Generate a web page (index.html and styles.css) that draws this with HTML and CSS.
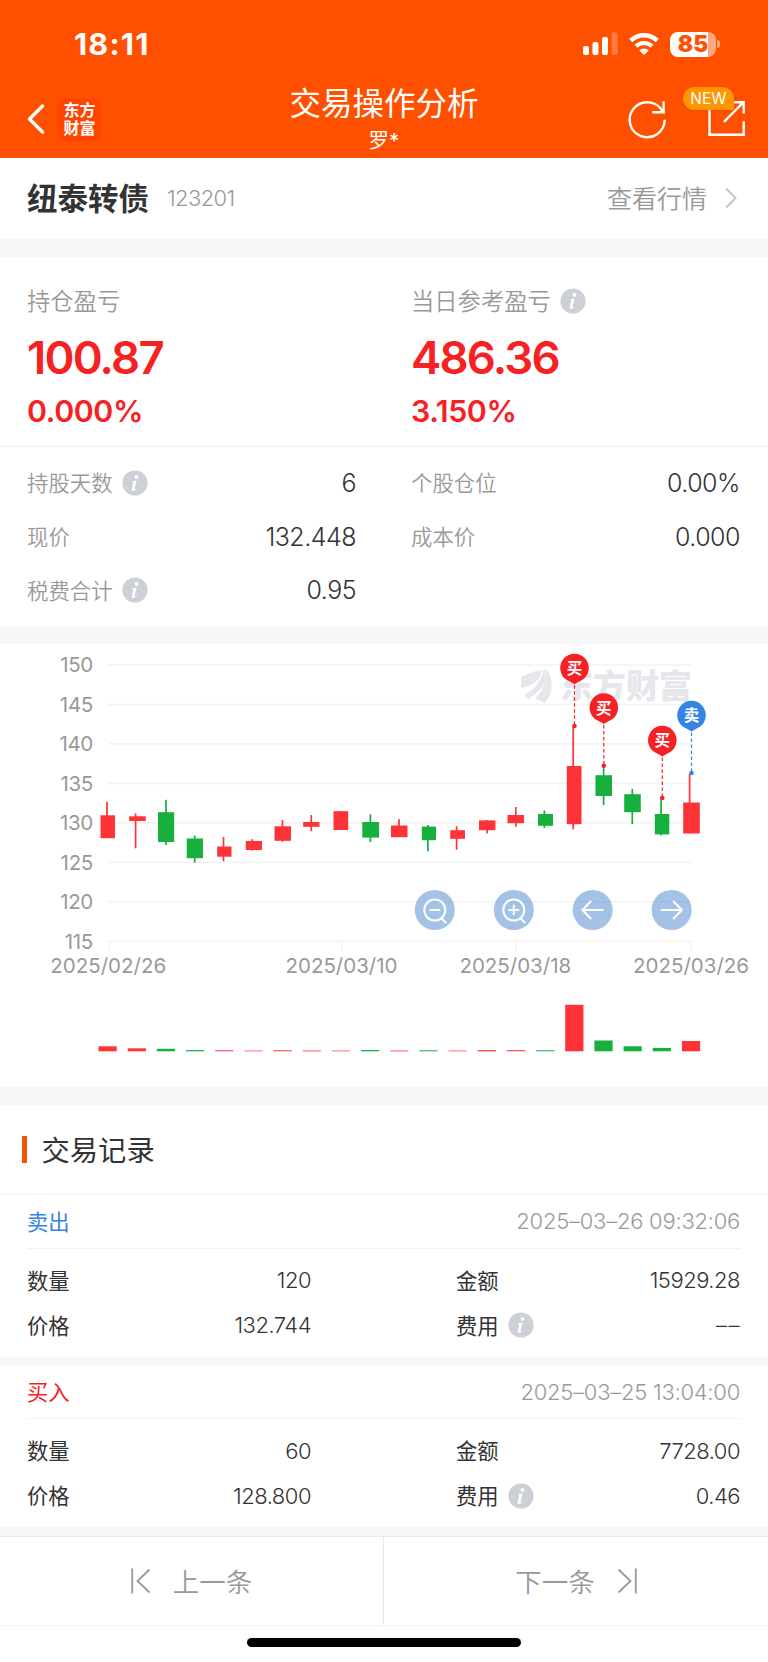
FILE: index.html
```
<!DOCTYPE html>
<html lang="zh">
<head>
  <meta charset="UTF-8">
  <title>交易操作分析</title>
  <meta name="viewport" content="width=device-width, initial-scale=1.0">
  <link rel="stylesheet" href="styles.css">
</head>
<body>

  <svg class="symbols" width="0" height="0">
    <symbol id="info" viewBox="0 0 26 26">
      <circle cx="13" cy="13" r="12.6" fill="#cdd0d6"/>
      <circle cx="14.5" cy="6.9" r="1.9" fill="#fff"/>
      <path d="M10.3 11.2l4.3-.7-2 8q-.3 1.3 1.8.2l.3.6q-4.9 3.4-5.1.4l1.7-7.3-1.1-.5z" fill="#fff"/>
    </symbol>
  </svg>

  <header class="header">
    <div class="status-bar">
      <span class="time">18:11</span>
      <div class="status-icons">
        <svg width="36" height="24" viewBox="0 0 36 24" fill="#fff">
          <rect x="0" y="14" width="6" height="9" rx="2"/>
          <rect x="9.5" y="10" width="6" height="13" rx="2"/>
          <rect x="19" y="5" width="6" height="18" rx="2"/>
          <rect x="28.7" y="0.5" width="6" height="22.5" rx="2" opacity="0.25"/>
        </svg>
        <svg class="wifi" width="30" height="24" viewBox="0 0 30 24">
          <path d="M1.8 8.6a19 19 0 0 1 26.4 0" fill="none" stroke="#fff" stroke-width="4.3"/>
          <path d="M6.9 14.2a11.6 11.6 0 0 1 16.2 0" fill="none" stroke="#fff" stroke-width="4"/>
          <path d="M10.2 18.4a7 7 0 0 1 9.6 0L15 23z" fill="#fff"/>
        </svg>
        <div class="battery"><span>85</span></div>
        <i class="battery-cap"></i>
      </div>
    </div>
    <div class="nav-bar">
      <div class="nav-left">
        <svg width="18" height="32" viewBox="0 0 18 32"><path d="M15.5 3L2.5 16l13 13" fill="none" stroke="#fff" stroke-width="3.4" stroke-linecap="round" stroke-linejoin="round"/></svg>
        <div class="brand">东方<br>财富</div>
      </div>
      <div class="nav-title">
        <h1>交易操作分析</h1>
        <p>罗*</p>
      </div>
      <div class="nav-right">
        <svg width="40" height="40" viewBox="0 0 40 40" fill="none" stroke="#fff" stroke-width="2.4">
          <path d="M37.7 20.8A17.5 17.5 0 1 1 35.6 12.4"/>
          <path d="M36.6 2.3v11H25.2"/>
        </svg>
        <div class="share">
          <svg width="40" height="40" viewBox="0 0 40 40" fill="none" stroke="#fff" stroke-width="2.4">
            <path d="M3.5 8v27.8h34.2V22.3"/>
            <path d="M18 22.8L37.5 3.2M27 3.2h10.7v11.3"/>
          </svg>
          <span class="badge">NEW</span>
        </div>
      </div>
    </div>
  </header>

  <section class="stock-bar">
    <span class="stock-name">纽泰转债</span>
    <span class="stock-code">123201</span>
    <a class="stock-link">查看行情</a>
    <svg width="12" height="22" viewBox="0 0 12 22"><path d="M1.2 1.5L10.5 11 1.2 20.5" fill="none" stroke="#c4c4c4" stroke-width="2"/></svg>
  </section>

  <section class="profit">
    <div class="profit-item">
      <div class="profit-label"><span>持仓盈亏</span></div>
      <div class="profit-value">100.87</div>
      <div class="profit-rate">0.000%</div>
    </div>
    <div class="profit-item">
      <div class="profit-label"><span>当日参考盈亏</span><svg class="info"><use href="#info"/></svg></div>
      <div class="profit-value">486.36</div>
      <div class="profit-rate">3.150%</div>
    </div>
  </section>

  <section class="details">
    <div class="detail"><span>持股天数</span><svg class="info"><use href="#info"/></svg><b>6</b></div>
    <div class="detail"><span>个股仓位</span><b>0.00%</b></div>
    <div class="detail"><span>现价</span><b>132.448</b></div>
    <div class="detail"><span>成本价</span><b>0.000</b></div>
    <div class="detail"><span>税费合计</span><svg class="info"><use href="#info"/></svg><b>0.95</b></div>
  </section>

  <section class="chart">
    <svg id="chart" width="768" height="443" viewBox="0 644 768 443">
      <g id="grid"></g>
      <g id="candles"></g>
      <g id="volumes"></g>
      <g class="watermark">
        <path d="M521 677q12-6 21-7-2 14-21 18z"/>
        <path d="M524 695q16-8 20-27 7 18-16 31z"/>
        <path d="M535 698q12-10 11-30 12 19-1 35z"/>
        <text x="560" y="698">东方财富</text>
      </g>
      <g id="pins"></g>
      <g class="tools">
        <g transform="translate(434.8 910)">
          <circle class="disc" r="20"/><circle class="lens" r="10.5"/><path d="M-5.3 0H5.3M6.5 8.3l5 4.6"/>
        </g>
        <g transform="translate(513.8 910)">
          <circle class="disc" r="20"/><circle class="lens" r="10.5"/><path d="M-5.3 0H5.3M0-5.3V5.3M6.5 8.3l5 4.6"/>
        </g>
        <g transform="translate(592.7 910)">
          <circle class="disc" r="20"/><path d="M10.8 0H-10M-1.5-9L-10.3 0-1.5 9"/>
        </g>
        <g transform="translate(671.6 910)">
          <circle class="disc" r="20"/><path d="M-10.8 0H10M1.5-9L10.3 0 1.5 9"/>
        </g>
      </g>
    </svg>
  </section>

  <section class="records">
    <h2><span>交易记录</span></h2>

    <div class="record">
      <div class="record-head"><span class="sell">卖出</span><time>2025–03–26 09:32:06</time></div>
      <div class="record-body">
        <div class="cell"><span>数量</span><b>120</b></div>
        <div class="cell"><span>金额</span><b>15929.28</b></div>
        <div class="cell"><span>价格</span><b>132.744</b></div>
        <div class="cell"><span>费用</span><svg class="info"><use href="#info"/></svg><b class="empty">––</b></div>
      </div>
    </div>

    <div class="record">
      <div class="record-head"><span class="buy">买入</span><time>2025–03–25 13:04:00</time></div>
      <div class="record-body">
        <div class="cell"><span>数量</span><b>60</b></div>
        <div class="cell"><span>金额</span><b>7728.00</b></div>
        <div class="cell"><span>价格</span><b>128.800</b></div>
        <div class="cell"><span>费用</span><svg class="info"><use href="#info"/></svg><b>0.46</b></div>
      </div>
    </div>
  </section>

  <footer class="pager">
    <a class="prev">
      <svg width="20" height="26" viewBox="0 0 20 26"><path d="M1.2 0.5v25M18.5 1.5L6.5 13l12 11.5"/></svg>
      <span>上一条</span>
    </a>
    <a class="next">
      <span>下一条</span>
      <svg width="20" height="26" viewBox="0 0 20 26"><path d="M18.8 0.5v25M1.5 1.5L13.5 13l-12 11.5"/></svg>
    </a>
  </footer>
  <div class="home-indicator"></div>

  <script>
    const RED = '#fd3338';
    const GREEN = '#17b03e';

    // [颜色, 实体左, 实体右, 实体上, 实体下, 影线x, 影线上, 影线下, 成交量高度]
    const bars = [
      [RED, 100.5, 115, 815.3, 838.2, 107, 801.8, 838, 5],
      [RED, 129.2, 145.8, 816.3, 821, 135.6, 813.5, 848.3, 3],
      [GREEN, 158, 174.2, 812.2, 842, 166, 799.8, 845, 2.5],
      [GREEN, 186.7, 203, 838.5, 858.2, 194.7, 835.5, 862.8, 1.2],
      [RED, 217.2, 231.5, 846.5, 856.7, 223.5, 837, 861.2, 1],
      [RED, 245.8, 262, 841, 850, 252.3, 839.2, 850.6, 0.7],
      [RED, 274.5, 291, 826.3, 840.8, 282.5, 820, 841.8, 1],
      [RED, 303.2, 319.5, 822, 826.8, 311.3, 815, 831.2, 0.8],
      [RED, 333.5, 348.2, 811.2, 830, 340.8, 811.2, 830, 0.7],
      [GREEN, 362.3, 379, 822, 837.6, 370.4, 814.2, 842, 1.3],
      [RED, 391, 407.5, 825.5, 837.2, 399, 819.2, 837, 0.8],
      [GREEN, 421.8, 436, 826.6, 840.2, 427.9, 825, 851.4, 1],
      [RED, 450.2, 465, 830.2, 838.8, 456.6, 826.2, 849.6, 0.7],
      [RED, 479, 495.4, 820.4, 830.2, 487.1, 820, 833.4, 1.2],
      [RED, 507.5, 524, 815, 823.2, 515.8, 807, 826.8, 1.1],
      [GREEN, 538, 553, 814, 825.8, 544.4, 810.5, 828, 1],
      [RED, 566.8, 581.5, 766, 824.2, 573.2, 727, 829.3, 46.5],
      [GREEN, 595.5, 612, 775.2, 796, 603.6, 767, 805, 10.8],
      [GREEN, 624.2, 640.8, 794.2, 812.2, 632.3, 788.8, 824, 5],
      [GREEN, 654.8, 669.3, 814, 834.4, 661.1, 799, 835.5, 3.4],
      [RED, 683.2, 699.8, 802.5, 833.5, 689.6, 774, 833.5, 10.3]
    ];

    const dates = [[108.7, '2025/02/26'], [342, '2025/03/10'], [515.8, '2025/03/18'], [691.5, '2025/03/26']];

    // [x, 圆心y, 末端y, 文字, 颜色]
    const pins = [
      [574.5, 668.3, 726, '买', '#f62122'],
      [603.8, 708, 765.7, '买', '#f62122'],
      [662.3, 740.5, 798, '买', '#f62122'],
      [691.5, 715.5, 773, '卖', '#3583e5']
    ];

    let grid = '';
    for (let i = 0; i < 8; i++) {
      const y = 665 + i * 39.46;
      grid += `<line x1="108" x2="691.5" y1="${y}" y2="${y}"/><text class="axis-y" x="93" y="${y + 7.4}">${150 - i * 5}</text>`;
    }
    dates.forEach(([x, text]) => {
      grid += `<line x1="${x}" x2="${x}" y1="941" y2="950.5"/><text class="axis-x" x="${x - 0.5}" y="973.3">${text}</text>`;
    });
    document.getElementById('grid').innerHTML = grid;

    let candles = '';
    let volumes = '';
    bars.forEach(([color, l, r, t, b, wx, wt, wb, vol], i) => {
      candles += `<rect x="${l}" y="${t}" width="${r - l}" height="${b - t}" fill="${color}"/>`;
      candles += `<rect x="${wx - 0.85}" y="${wt}" width="1.7" height="${wb - wt}" fill="${color}"/>`;
      volumes += `<rect x="${98.5 + i * 29.17}" y="${1051.3 - vol}" width="18.2" height="${vol}" fill="${color}"/>`;
    });
    document.getElementById('candles').innerHTML = candles;
    document.getElementById('volumes').innerHTML = volumes;

    document.getElementById('pins').innerHTML = pins.map(([x, y, end, text, color]) => `
      <g fill="${color}">
        <line x1="${x}" x2="${x}" y1="${y + 17}" y2="${end}" stroke="${color}"/>
        <circle cx="${x}" cy="${end}" r="2.3"/>
        <path d="M${x} ${y + 16}q-3-2-8-4.5A14.3 14.3 0 1 1 ${x + 8} ${y + 11.5}q-5 2.5-8 4.5z"/>
        <text x="${x}" y="${y + 5.8}">${text}</text>
      </g>`).join('');
  </script>

</body>
</html>
```
FILE: styles.css
```
* {
  box-sizing: border-box;
}

body {
  margin: 0;
  font-family: Inter, "Noto Sans CJK SC", sans-serif;
  background: #fff;
  color: #333;
}

h1, h2, p {
  margin: 0;
  font-weight: 400;
}

b {
  font-weight: 400;
}

.symbols {
  display: block;
}

.info {
  width: 26px;
  height: 26px;
  margin-left: 9.5px;
}

.header {
  height: 158px;
  background: #ff5000;
  color: #fff;
}

.status-bar {
  height: 88px;
  padding: 0 48px 0 74px;
  display: flex;
  justify-content: space-between;
  align-items: center;
}

.time {
  padding-bottom: 2px;
  font-size: 30.5px;
  font-weight: 750;
  letter-spacing: 1.2px;
}

.status-icons {
  display: flex;
  align-items: center;
}

.wifi {
  margin: 0 11px 0 10px;
}

.battery {
  width: 46px;
  height: 25px;
  border-radius: 8px;
  background: linear-gradient(to right, #fff 38.5px, rgba(255,255,255,0.5) 38.5px);
  color: #ff5000;
  font-size: 22.5px;
  font-weight: 900;
  line-height: 24px;
  text-align: center;
}

.battery-cap {
  width: 3px;
  height: 8px;
  margin-left: 1px;
  border-radius: 0 3px 3px 0;
  background: rgba(255,255,255,0.5);
}

.nav-bar {
  height: 70px;
  padding: 0 22px;
  display: grid;
  grid-template-columns: 1fr auto 1fr;
}

.nav-left {
  display: flex;
  align-items: center;
  height: 62px;
  padding-left: 5px;
}

.brand {
  width: 43px;
  height: 43px;
  margin-left: 13px;
  padding-top: 3px;
  border-radius: 8px;
  background: #ff4400;
  font-size: 16px;
  font-weight: 700;
  line-height: 18px;
  text-align: center;
}

.nav-title {
  text-align: center;
}

.nav-title h1 {
  margin-top: -1px;
  font-size: 31.5px;
  line-height: 34px;
}

.nav-title p {
  font-size: 20.5px;
  line-height: 39px;
}

.nav-right {
  display: flex;
  justify-content: flex-end;
  align-items: center;
  height: 62px;
  gap: 39px;
}

.share {
  position: relative;
  height: 40px;
}

.badge {
  position: absolute;
  left: -23px;
  top: -12px;
  width: 51px;
  height: 23px;
  border-radius: 12px 12px 2px 12px;
  background: #ff9500;
  box-shadow: 0 0 3px rgba(200,60,0,0.4);
  font-size: 15.5px;
  line-height: 24px;
  text-align: center;
}

.stock-bar {
  display: flex;
  align-items: center;
  height: 81px;
  padding: 0 31px 2px 27px;
}

.stock-name {
  padding-bottom: 1px;
  font-size: 30.5px;
  font-weight: 600;
}

.stock-code {
  flex: 1;
  margin-left: 18px;
  font-size: 22px;
  font-weight: 350;
  letter-spacing: -0.6px;
  color: #999;
}

.stock-link {
  margin-right: 18px;
  padding-bottom: 1px;
  font-size: 25px;
  font-weight: 350;
  color: #999;
}

.profit {
  display: flex;
  height: 208px;
  padding: 27.5px 0 0 27px;
  border-top: 18px solid #f7f7f7;
  border-bottom: 1px solid #eee;
}

.profit-item {
  flex: 0 0 384px;
}

.profit-label {
  display: flex;
  align-items: center;
  height: 32px;
  font-size: 23.3px;
  font-weight: 350;
  color: #999;
}

.profit-label span,
.detail span,
.cell span,
.record-head span,
.records h2 span,
.pager span {
  padding-bottom: 2px;
}

.profit-value {
  font-size: 45.5px;
  font-weight: 570;
  line-height: 50px;
  margin-top: 16px;
  letter-spacing: -1.8px;
  color: #f62122;
}

.profit-rate {
  font-size: 30.3px;
  font-weight: 560;
  line-height: 36px;
  margin-top: 10px;
  letter-spacing: -0.4px;
  color: #f62122;
}

.details {
  display: grid;
  grid-template-columns: 329px 329px;
  grid-auto-rows: 53.8px;
  column-gap: 55px;
  height: 179px;
  padding: 9px 0 0 27px;
}

.detail {
  display: flex;
  align-items: center;
  font-size: 21.4px;
  font-weight: 350;
  color: #999;
}

.detail b {
  margin-left: auto;
  font-size: 25px;
  font-weight: 360;
  letter-spacing: -0.5px;
  color: #333;
}

.chart {
  height: 479px;
  border-top: 18px solid #f7f7f7;
  border-bottom: 18px solid #f7f7f7;
}

#chart {
  display: block;
}

#grid line {
  stroke: #f3f3f3;
  stroke-width: 1.6;
}

#grid text {
  font-size: 20.5px;
  font-weight: 370;
  fill: #999;
}

#grid .axis-y {
  text-anchor: end;
  letter-spacing: -0.3px;
}

.axis-x {
  text-anchor: middle;
}

.watermark {
  fill: #e6e6ec;
}

.watermark text {
  font-size: 33px;
  font-weight: 900;
}

#pins line {
  stroke-width: 1.2;
  stroke-dasharray: 3.5 2.5;
}

#pins text {
  fill: #fff;
  font-size: 15.5px;
  font-weight: 700;
  text-anchor: middle;
}

.tools .disc {
  fill: rgba(72,133,205,0.5);
}

.tools path,
.tools .lens {
  fill: none;
  stroke: #fff;
  stroke-width: 2;
}

.records h2 {
  display: flex;
  align-items: center;
  height: 90px;
  padding-left: 22px;
  border-bottom: 2px solid #f6f6f6;
  font-size: 28.3px;
}

.records h2::before {
  content: "";
  width: 5px;
  height: 27px;
  margin-right: 14.5px;
  background: #f05500;
}

.record {
  height: 170.5px;
  padding: 0 27px;
  border-bottom: 9px solid #f7f7f7;
}

.record-head {
  display: flex;
  justify-content: space-between;
  align-items: center;
  height: 53.5px;
  border-bottom: 1px solid #f2f2f2;
  font-size: 21.3px;
}

.record-head time {
  margin-right: 1px;
  font-size: 22px;
  font-weight: 360;
  letter-spacing: -0.25px;
  color: #999;
}

.sell {
  color: #3583e5;
}

.buy {
  color: #f62122;
}

.record-body {
  display: grid;
  grid-template-columns: 284px 284px;
  grid-auto-rows: 45px;
  column-gap: 145px;
  padding-top: 9px;
}

.cell {
  display: flex;
  align-items: center;
  font-size: 21.3px;
}

.cell b {
  margin-left: auto;
  font-size: 22px;
  font-weight: 350;
  letter-spacing: -0.5px;
}

.cell .empty {
  margin-right: -1px;
  letter-spacing: 1.5px;
}

.pager {
  display: flex;
  height: 90px;
  border-top: 1px solid #eaeaea;
  border-bottom: 1px solid #f2f2f2;
}

.pager a {
  width: 50%;
  display: flex;
  justify-content: center;
  align-items: center;
  gap: 22px;
  font-size: 26.5px;
  font-weight: 350;
  color: #999;
}

.pager .prev {
  border-right: 1px solid #e8e8e8;
}

.pager path {
  fill: none;
  stroke: #999;
  stroke-width: 1.8;
}

.home-indicator {
  width: 274px;
  height: 9px;
  margin: 12px auto 0;
  border-radius: 5px;
  background: #000;
}
```
